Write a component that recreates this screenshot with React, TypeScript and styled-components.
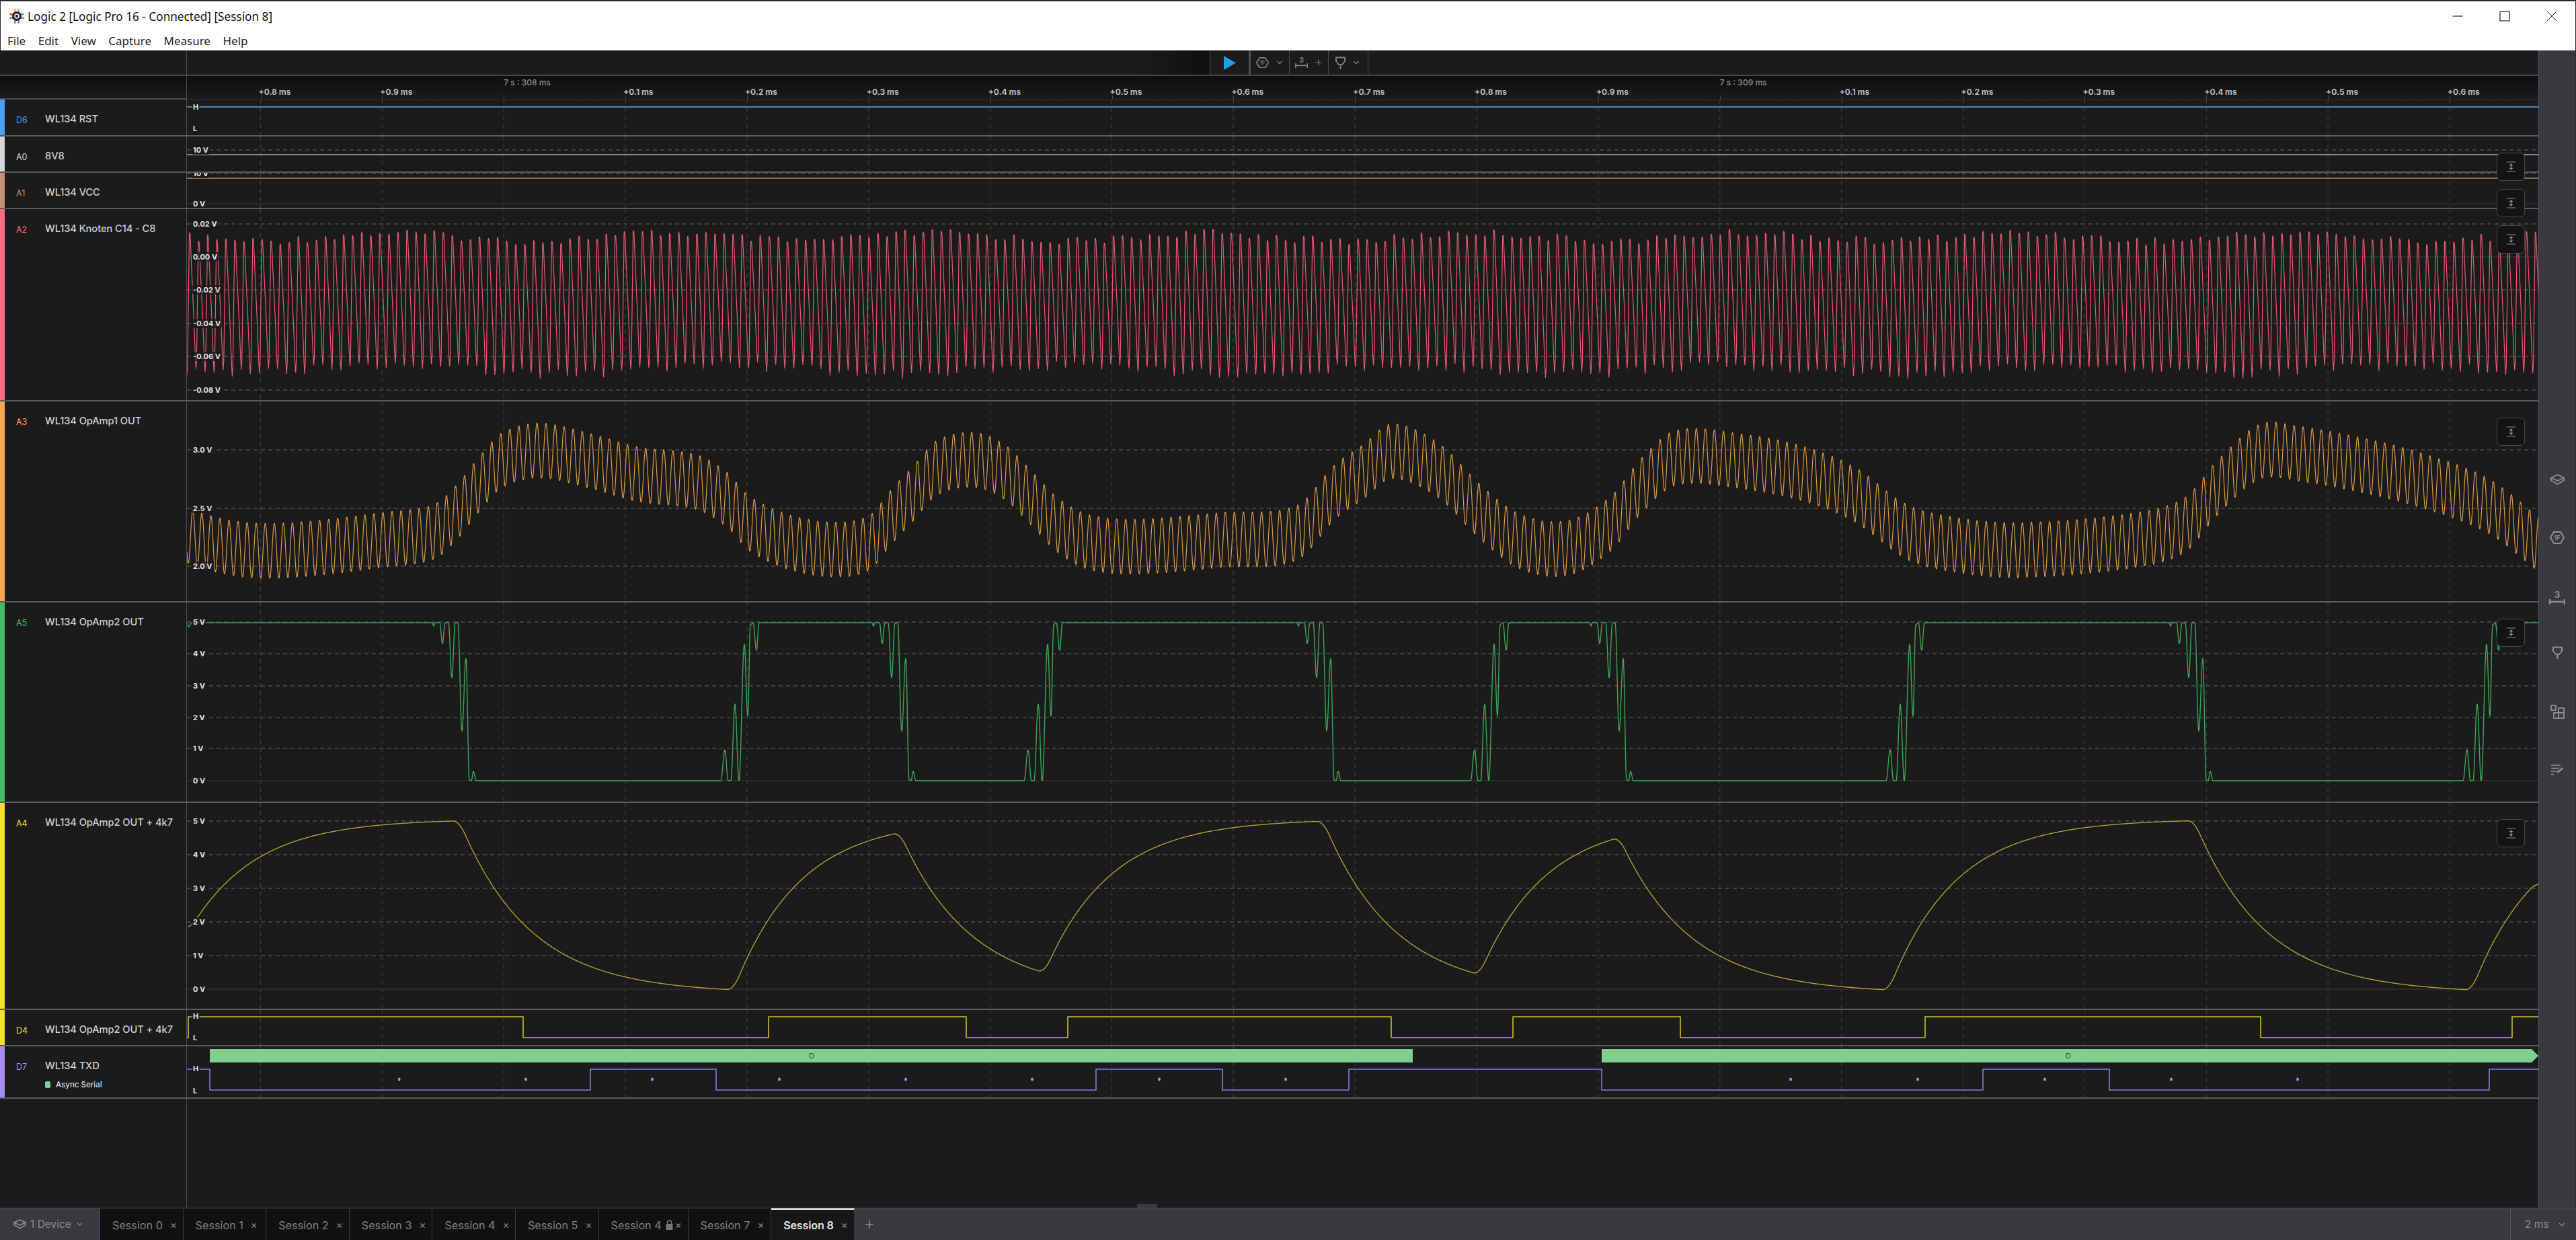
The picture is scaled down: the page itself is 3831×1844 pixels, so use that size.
import React from 'react';
import styled, { createGlobalStyle } from 'styled-components';
import { ChevronDown, Plus } from 'lucide-react';

const GlobalStyle = createGlobalStyle`
	html, body {
		margin: 0;
		padding: 0;
		overflow: hidden;
		background: #1b1b1c;
	}
	* {
		box-sizing: border-box;
	}
`;

const UI_FONT = `Inter, 'Liberation Sans', sans-serif`;
const GRID_X0 = 387.5;
const GRID_STEP = 180.86;
const PLOT_X0 = 278;
const PLOT_W = 3497;
const PERIOD = 13.47;

/* ---------- layout ---------- */

const Root = styled.div`
	width: 100vw;
	height: 100vh;
	display: flex;
	flex-direction: column;
	background: #1b1b1c;
	font-family: ${UI_FONT};
`;

const TitleBar = styled.div`
	height: 75px;
	flex: none;
	background: #fff;
	border-top: 2px solid #2a2a2a;
	border-left: 1px solid #2a2a2a;
	border-right: 1px solid #2a2a2a;
`;

const TitleRow = styled.div`
	height: 44px;
	display: flex;
	align-items: center;
	padding-left: 12px;
`;

const TitleText = styled.span`
	margin-left: 4px;
	font-family: 'Noto Sans', sans-serif;
	font-size: 17.2px;
	color: #111;
	white-space: nowrap;
`;

const WindowButtons = styled.div`
	margin-left: auto;
	display: flex;
	margin-right: 0;
`;

const WindowButton = styled.div`
	width: 70px;
	height: 44px;
	display: flex;
	align-items: center;
	justify-content: center;
`;

const MenuBar = styled.div`
	height: 29px;
	display: flex;
	align-items: center;
	padding-left: 10px;
	gap: 18.5px;
	font-family: 'Noto Sans', sans-serif;
	font-size: 17px;
	color: #222;
`;

const Main = styled.div`
	flex: 1;
	min-height: 0;
	display: flex;
`;

const Content = styled.div`
	flex: 1;
	min-width: 0;
	display: flex;
	flex-direction: column;
`;

const Toolbar = styled.div`
	height: 38px;
	flex: none;
	display: flex;
	border-bottom: 2px solid #46464a;
`;

const ToolbarCorner = styled.div`
	width: 278px;
	flex: none;
	border-right: 1.5px solid #4c4c50;
`;

const ToolbarFill = styled.div`
	width: 1521px;
	flex: none;
	background: linear-gradient(to right, #1b1b1c 93%, #0f0f0f 100%);
`;

const ToolCell = styled.div<{ $w: number; $thick?: boolean }>`
	width: ${(p) => p.$w}px;
	flex: none;
	display: flex;
	align-items: center;
	justify-content: center;
	gap: 9px;
	color: #7d7d7d;
	border-left: ${(p) => (p.$thick ? '3px solid #4c4c50' : '1px solid #4c4c50')};
`;

const ToolEnd = styled.div`
	flex: 1;
	border-left: 1px solid #4c4c50;
`;

const Ruler = styled.div`
	height: 35px;
	flex: none;
	display: flex;
`;

const RulerCorner = styled.div`
	width: 278px;
	flex: none;
	background: linear-gradient(#0e0e0e, #1a1a1b);
	border-right: 1.5px solid #4c4c50;
	border-bottom: 2px solid #4c4c50;
`;

const RulerTrack = styled.div`
	flex: 1;
	min-width: 0;
	display: flex;
	overflow: hidden;
	padding-left: ${GRID_X0 - PLOT_X0}px;
	background: linear-gradient(#0e0e0e, #1a1a1b);
	border-bottom: 1px solid #2f2f34;
`;

const Tick = styled.div`
	position: relative;
	width: ${GRID_STEP}px;
	flex: none;
	margin-right: 0;
	white-space: nowrap;

	&::after {
		content: '';
		position: absolute;
		left: 0;
		bottom: 0;
		height: 5px;
		border-left: 1.5px dashed #4a4a4e;
	}
`;

const TickText = styled.span<{ $major?: boolean }>`
	display: block;
	margin-left: ${(p) => (p.$major ? '0' : '-3px')};
	padding-top: ${(p) => (p.$major ? '3px' : '17px')};
	font-size: 12px;
	line-height: 14px;
	font-weight: ${(p) => (p.$major ? 500 : 700)};
	color: ${(p) => (p.$major ? '#8e8e8e' : '#b9b9b9')};
`;

const Rows = styled.div`
	flex: 1;
	min-height: 0;
	display: flex;
	flex-direction: column;
`;

const Row = styled.div<{ $h: number }>`
	height: ${(p) => p.$h}px;
	flex: none;
	display: flex;
	border-bottom: 2px solid #59595e;
`;

const LabelCell = styled.div<{ $color: string }>`
	width: 278px;
	flex: none;
	display: flex;
	flex-direction: column;
	padding-top: 19px;
	padding-left: 17px;
	background: #1b1b1c;
	border-left: 7px solid ${(p) => p.$color};
	border-right: 1.5px solid #4c4c50;
`;

const LabelLine = styled.div`
	display: flex;
	align-items: center;
	height: 20px;
`;

const Tag = styled.span<{ $color: string }>`
	width: 43px;
	flex: none;
	font-size: 12.5px;
	padding-top: 3px;
	color: ${(p) => p.$color};
`;

const Name = styled.span`
	font-size: 14.7px;
	font-weight: 500;
	letter-spacing: -0.1px;
	color: #cfcfcf;
	white-space: nowrap;
`;

const Analyzer = styled.div`
	display: flex;
	align-items: center;
	gap: 8px;
	margin-top: 11px;
	margin-left: 43px;
	font-size: 11.5px;
	font-weight: 500;
	color: #dcdcdc;
`;

const AnalyzerDot = styled.span`
	width: 8px;
	height: 10px;
	border-radius: 2px;
	background: #7fcf8f;
`;

const Plot = styled.div`
	position: relative;
	flex: 1;
	min-width: 0;
`;

const PlotClip = styled.div`
	position: relative;
	height: 100%;
	overflow: hidden;
`;

const AxisLabel = styled.span<{ $y: number }>`
	position: absolute;
	left: 7px;
	top: ${(p) => p.$y}px;
	transform: translateY(-50%);
	padding: 1px 2px;
	border-radius: 3px;
	background: rgba(27, 27, 28, 0.75);
	font-size: 11px;
	line-height: 12px;
	font-weight: 700;
	color: #e2e2e2;
	white-space: nowrap;
`;

const FitButton = styled.div`
	position: absolute;
	top: 24px;
	right: 20px;
	z-index: 5;
	width: 42px;
	height: 42px;
	display: flex;
	align-items: center;
	justify-content: center;
	border-radius: 7px;
	background: #141415;
	border: 1.5px solid #48484c;
	color: #8a8a8a;
`;

const EmptyRow = styled.div`
	position: relative;
	flex: 1;
	display: flex;
`;

const EmptyLabel = styled.div`
	width: 278px;
	flex: none;
	border-right: 1.5px solid #4c4c50;
`;

const DragHandle = styled.div`
	position: absolute;
	left: 1691px;
	bottom: 0;
	width: 30px;
	height: 6px;
	border-radius: 2px 2px 0 0;
	background: #3a393f;
`;

const Sidebar = styled.div`
	width: 56px;
	flex: none;
	padding-top: 594px;
	background: #3a393f;
	border-left: 1.5px solid #55555a;
	border-right: 1px solid #2a2a2a;
	color: #8f8f93;
`;

const SideItem = styled.div<{ $shift: number }>`
	height: 87px;
	display: flex;
	align-items: center;
	justify-content: center;
	padding-top: ${(p) => Math.max(p.$shift, 0) * 2}px;
	padding-bottom: ${(p) => Math.max(-p.$shift, 0) * 2}px;
`;

const TabBar = styled.div`
	height: 48px;
	flex: none;
	display: flex;
	background: #3a393f;
	border-top: 1.5px solid #4d4d52;
	color: #808080;
`;

const DeviceCell = styled.div`
	width: 149px;
	flex: none;
	display: flex;
	align-items: center;
	padding-left: 20px;
	gap: 6px;
	font-size: 15.5px;
	color: #8c8c8c;
	border-right: 1px solid #4d4d52;
`;

const Tab = styled.div<{ $active?: boolean; $locked?: boolean }>`
	width: ${(p) => (p.$locked ? 133 : 123.6)}px;
	height: 100%;
	display: flex;
	align-items: center;
	flex: none;
	padding-left: 18px;
	font-size: 16.2px;
	white-space: nowrap;
	font-weight: ${(p) => (p.$active ? 600 : 400)};
	letter-spacing: ${(p) => (p.$active ? '-0.2px' : '0')};
	color: ${(p) => (p.$active ? '#e4e4e4' : '#808080')};
	background: ${(p) => (p.$active ? '#171718' : '#111112')};
	border-right: 1px solid #3c3c40;
	border-top: ${(p) => (p.$active ? '2.5px solid #fff' : '2.5px solid transparent')};
`;

const TabClose = styled.span<{ $tight?: boolean }>`
	margin-left: ${(p) => (p.$tight ? 3 : 11)}px;
	font-size: 15px;
	font-weight: 400;
	color: #8a8a8a;
`;

const LockGlyph = styled.svg`
	margin-left: 6px;
`;

const AddTab = styled.div`
	width: 44px;
	display: flex;
	align-items: center;
	justify-content: center;
	color: #8c8c90;
`;

const ZoomCell = styled.div`
	margin-left: auto;
	width: 98px;
	flex: none;
	display: flex;
	align-items: center;
	padding-left: 21px;
	gap: 12px;
	font-size: 15.5px;
	color: #8c8c8c;
	border-left: 1px solid #55555a;
`;

/* ---------- wave forms ---------- */

type Key = [number, number];

const sample = (from: number, to: number, step: number, fn: (x: number) => number) => {
	const parts: string[] = [];
	for (let x = from; x <= to; x += step) {
		parts.push(`${parts.length ? 'L' : 'M'}${x.toFixed(1)} ${fn(x).toFixed(1)}`);
	}
	return parts.join('');
};

const findSegment = (keys: Key[], x: number) => {
	let i = 0;
	while (i < keys.length - 2 && keys[i + 1][0] < x) i++;
	return i;
};

const spline = (keys: Key[]) => (x: number) => {
	const i = findSegment(keys, x);
	const p0 = keys[Math.max(i - 1, 0)];
	const p1 = keys[i];
	const p2 = keys[i + 1];
	const p3 = keys[Math.min(i + 2, keys.length - 1)];
	const t = (x - p1[0]) / (p2[0] - p1[0]);
	const m1 = ((p2[1] - p0[1]) / (p2[0] - p0[0] || 1)) * (p2[0] - p1[0]);
	const m2 = ((p3[1] - p1[1]) / (p3[0] - p1[0] || 1)) * (p2[0] - p1[0]);
	const t2 = t * t;
	const t3 = t2 * t;
	return (2 * t3 - 3 * t2 + 1) * p1[1] + (t3 - 2 * t2 + t) * m1 + (-2 * t3 + 3 * t2) * p2[1] + (t3 - t2) * m2;
};

const eased = (keys: Key[]) => (x: number) => {
	const i = findSegment(keys, x);
	const a = keys[i];
	const b = keys[i + 1];
	const t = Math.min(Math.max((x - a[0]) / (b[0] - a[0]), 0), 1);
	return a[1] + (b[1] - a[1]) * (0.5 - 0.5 * Math.cos(Math.PI * t));
};

const logicPath = (startHigh: boolean, edges: number[], hi: number, lo: number) => {
	let high = startHigh;
	let d = `M${PLOT_X0} ${high ? hi : lo}`;
	edges.forEach((x) => {
		d += `H${x}`;
		high = !high;
		d += `V${high ? hi : lo}`;
	});
	return `${d}H${PLOT_X0 + PLOT_W}`;
};

const opamp1Center: Key[] = [
	[278, 796], [330, 812], [389, 819], [470, 815], [567, 803], [645, 791], [679, 762], [712, 721], [746, 685], [802, 670],
	[880, 686], [947, 705], [1036, 717], [1081, 743], [1114, 778], [1170, 805], [1237, 817], [1293, 807], [1326, 768],
	[1360, 732], [1393, 696], [1449, 684], [1494, 702], [1533, 740], [1572, 780], [1616, 805], [1683, 813], [1817, 803],
	[1929, 792], [1985, 732], [2027, 702], [2070, 671], [2140, 700], [2200, 760], [2260, 805], [2330, 815], [2394, 780],
	[2443, 720], [2492, 681], [2590, 686], [2687, 706], [2761, 737], [2834, 790], [2907, 810], [3005, 818], [3176, 803],
	[3250, 780], [3298, 725], [3360, 672], [3420, 675], [3518, 693], [3600, 714], [3700, 752], [3775, 809],
];

const opamp1Path = () => {
	const center = spline(opamp1Center);
	return sample(PLOT_X0, PLOT_X0 + PLOT_W, 0.6, (x) => center(x) + 41 * Math.cos((2 * Math.PI * (x - 280)) / PERIOD));
};

const knotenPath = () => {
	const parts: string[] = [];
	const n = Math.ceil(PLOT_W / PERIOD) + 1;
	for (let i = -1; i < n; i++) {
		const x0 = 282 + i * PERIOD;
		const noise = Math.sin(i * 12.9898) * 43758.5453;
		const rnd = noise - Math.floor(noise);
		const noise2 = Math.sin(i * 78.233) * 24634.6345;
		const rnd2 = noise2 - Math.floor(noise2);
		const top = 352 + 6 * Math.sin(i * 0.21) + (rnd - 0.5) * 12;
		const bottom = 550 + 6 * Math.sin(i * 0.17 + 1) + (rnd2 - 0.5) * 14;
		const h = bottom - top;
		const pts: Key[] = [
			[x0 - 0.5, top + 2],
			[x0, top],
			[x0 + 0.8, top + 3],
			[x0 + 3, top + h * 0.27],
			[x0 + 6, top + h * 0.6],
			[x0 + 8.6, top + h * 0.93],
			[x0 + 9.5, bottom],
			[x0 + 10.4, top + h * 0.93],
			[x0 + 12.7, top + h * 0.12],
		];
		pts.forEach(([x, y]) => {
			if (x >= PLOT_X0 - 2 && x <= PLOT_X0 + PLOT_W + 2) parts.push(`${parts.length ? 'L' : 'M'}${x.toFixed(1)} ${y.toFixed(1)}`);
		});
	}
	return parts.join('');
};

const HI5 = 926;
const LO5 = 1161;

const fallGroup = (x: number): Key[] => [
	[x - 55, HI5], [x - 53, 931], [x - 51, HI5], [x - 44, HI5], [x - 40, 957], [x - 36, HI5], [x - 31, HI5], [x - 26, 1008],
	[x - 21, HI5], [x - 17, HI5], [x - 11, 1087], [x - 5, 979], [x, LO5 - 1], [x + 3, LO5], [x + 6, 1147], [x + 10, LO5],
];

const riseGroup = (x: number): Key[] => [
	[x - 44, LO5], [x - 38, 1115], [x - 33, LO5], [x - 29, LO5], [x - 23, 1047], [x - 17, LO5], [x - 9, 958], [x - 4, 1065],
	[x, 929], [x + 4, HI5], [x + 9, 967], [x + 13, HI5],
];

const FALLS = [698, 1352, 1984, 2419, 3281];
const RISES = [1116, 1567, 2231, 2849, 3707];

const opamp2Path = () => {
	const keys: Key[] = [[278, HI5 + 1], [281, 932], [285, HI5]];
	FALLS.forEach((fall, i) => {
		keys.push(...fallGroup(fall), ...riseGroup(RISES[i]));
	});
	keys.push([3780, HI5]);
	return sample(PLOT_X0, PLOT_X0 + PLOT_W, 0.5, eased(keys));
};

// rc filter of the op amp output, with the corners rounded off
const FILTER_DOWN = [684, 1339, 1969, 2409, 3264];
const FILTER_UP = [1092, 1554, 2201, 2810, 3677];

const filteredPath = () => {
	const ys: number[] = [];
	let y = 1388;
	let high = true;
	for (let x = 280; x <= PLOT_X0 + PLOT_W; x += 1) {
		if (FILTER_DOWN.includes(x)) high = false;
		if (FILTER_UP.includes(x)) high = true;
		y += high ? (1218 - y) / 98 : (1477 - y) / 105;
		ys.push(y);
	}
	const R = 9;
	const parts: string[] = [];
	ys.forEach((_, i) => {
		const from = Math.max(i - R, 0);
		const to = Math.min(i + R, ys.length - 1);
		let sum = 0;
		for (let j = from; j <= to; j++) sum += ys[j];
		parts.push(`${parts.length ? 'L' : 'M'}${280 + i} ${(sum / (to - from + 1)).toFixed(1)}`);
	});
	return parts.join('');
};

/* ---------- channel data ---------- */

type Axis = { y: number; label: string; line?: 'dash' | 'solid' };
type Trace = { d: string; color: string; width: number };

type Channel = {
	tag: string;
	name: string;
	color: string;
	top: number;
	h: number;
	axes: Axis[];
	traces: Trace[];
	fit?: boolean;
	analyzer?: string;
	extra?: React.ReactNode;
};

const TX_DOTS = [593.6, 782, 970, 1159, 1347, 1535, 1724, 1912, 2663, 2852, 3041, 3229, 3417];

const channels: Channel[] = [
	{
		tag: 'D6',
		name: 'WL134 RST',
		color: '#4b9eff',
		top: 148,
		h: 55,
		axes: [
			{ y: 159, label: 'H' },
			{ y: 191, label: 'L' },
		],
		traces: [{ d: `M${PLOT_X0} 159H3775`, color: '#4a86c5', width: 2 }],
	},
	{
		tag: 'A0',
		name: '8V8',
		color: '#d6d6d6',
		top: 203,
		h: 54,
		fit: true,
		axes: [{ y: 223, label: '10 V', line: 'dash' }],
		traces: [{ d: `M${PLOT_X0} 230H3775`, color: '#a8a8a8', width: 1.6 }],
	},
	{
		tag: 'A1',
		name: 'WL134 VCC',
		color: '#c49277',
		top: 257,
		h: 54,
		fit: true,
		axes: [
			{ y: 258, label: '10 V', line: 'dash' },
			{ y: 303, label: '0 V', line: 'solid' },
		],
		traces: [{ d: `M${PLOT_X0} 265H3775`, color: '#8a6a58', width: 1.8 }],
	},
	{
		tag: 'A2',
		name: 'WL134 Knoten C14 - C8',
		color: '#ff6b81',
		top: 311,
		h: 286,
		fit: true,
		axes: [
			{ y: 333, label: '0.02 V', line: 'dash' },
			{ y: 382, label: '0.00 V', line: 'solid' },
			{ y: 431, label: '-0.02 V', line: 'dash' },
			{ y: 481, label: '-0.04 V', line: 'dash' },
			{ y: 530, label: '-0.06 V', line: 'dash' },
			{ y: 580, label: '-0.08 V', line: 'dash' },
		],
		traces: [{ d: knotenPath(), color: '#e65c73', width: 1.2 }],
	},
	{
		tag: 'A3',
		name: 'WL134 OpAmp1 OUT',
		color: '#ffa64d',
		top: 597,
		h: 299,
		fit: true,
		axes: [
			{ y: 669, label: '3.0 V', line: 'dash' },
			{ y: 756, label: '2.5 V', line: 'dash' },
			{ y: 842, label: '2.0 V', line: 'dash' },
		],
		traces: [{ d: opamp1Path(), color: '#dd9a45', width: 1.2 }],
	},
	{
		tag: 'A5',
		name: 'WL134 OpAmp2 OUT',
		color: '#3fbf62',
		top: 896,
		h: 298,
		fit: true,
		axes: [
			{ y: 925, label: '5 V', line: 'dash' },
			{ y: 972, label: '4 V', line: 'dash' },
			{ y: 1020, label: '3 V', line: 'dash' },
			{ y: 1067, label: '2 V', line: 'dash' },
			{ y: 1113, label: '1 V', line: 'dash' },
			{ y: 1161, label: '0 V', line: 'solid' },
		],
		traces: [{ d: opamp2Path(), color: '#3fa457', width: 1.4 }],
	},
	{
		tag: 'A4',
		name: 'WL134 OpAmp2 OUT + 4k7',
		color: '#f2e02e',
		top: 1194,
		h: 308,
		fit: true,
		axes: [
			{ y: 1221, label: '5 V', line: 'dash' },
			{ y: 1271, label: '4 V', line: 'dash' },
			{ y: 1321, label: '3 V', line: 'dash' },
			{ y: 1371, label: '2 V', line: 'dash' },
			{ y: 1421, label: '1 V', line: 'dash' },
			{ y: 1471, label: '0 V', line: 'solid' },
		],
		traces: [{ d: filteredPath(), color: '#aaa02c', width: 1.4 }],
	},
	{
		tag: 'D4',
		name: 'WL134 OpAmp2 OUT + 4k7',
		color: '#f2e02e',
		top: 1502,
		h: 54,
		axes: [
			{ y: 1511, label: 'H' },
			{ y: 1543, label: 'L' },
		],
		traces: [
			{
				d: logicPath(false, [280, 778, 1143, 1437, 1588, 2069, 2250, 2499, 2863, 3362, 3736], 1512, 1543),
				color: '#cdbf2b',
				width: 1.6,
			},
		],
	},
	{
		tag: 'D7',
		name: 'WL134 TXD',
		color: '#a58cf2',
		top: 1556,
		h: 78,
		analyzer: 'Async Serial',
		axes: [
			{ y: 1589, label: 'H' },
			{ y: 1622, label: 'L' },
		],
		traces: [
			{
				d: logicPath(true, [312, 878, 1065, 1630, 1818, 2006, 2382, 2949, 3137, 3702], 1590, 1621),
				color: '#8f78d8',
				width: 1.6,
			},
		],
		extra: (
			<>
				<rect x={312} y={1560} width={1789} height={20} fill="#7fcf8f" />
				<polygon points="2382,1560 3765,1560 3775,1570 3765,1580 2382,1580" fill="#7fcf8f" />
				<text x={1207} y={1574} fontSize={11} fontFamily={UI_FONT} fill="#24603a" textAnchor="middle">
					D
				</text>
				<text x={3076} y={1574} fontSize={11} fontFamily={UI_FONT} fill="#24603a" textAnchor="middle">
					D
				</text>
				{TX_DOTS.map((x) => (
					<ellipse key={x} cx={x} cy={1605} rx={2} ry={2.4} fill="#a58cf2" />
				))}
			</>
		),
	},
];

const gridXs = Array.from({ length: 19 }, (_, k) => GRID_X0 + k * GRID_STEP);

const ticks = ['+0.8', '+0.9', '', '+0.1', '+0.2', '+0.3', '+0.4', '+0.5', '+0.6', '+0.7', '+0.8', '+0.9', '', '+0.1', '+0.2', '+0.3', '+0.4', '+0.5', '+0.6'];
const sessions = ['Session 0', 'Session 1', 'Session 2', 'Session 3', 'Session 4', 'Session 5', 'Session 4', 'Session 7', 'Session 8'];

/* ---------- icons ---------- */

const Logo = () => (
	<svg width="24" height="24" viewBox="0 0 24 24">
		<rect x="0.5" y="0.5" width="23" height="23" rx="5" fill="#f4f4f6" />
		<rect x="8" y="1" width="2.4" height="5" fill="#f0b323" />
		<rect x="13.5" y="1" width="2.4" height="5" fill="#f0b323" />
		<rect x="1.5" y="8" width="5" height="2.4" fill="#ee4b3c" />
		<rect x="1.5" y="13.5" width="5" height="2.4" fill="#ee4b3c" />
		<rect x="17.5" y="8" width="5" height="2.4" fill="#2aa5e6" />
		<rect x="17.5" y="13.5" width="5" height="2.4" fill="#2aa5e6" />
		<rect x="8" y="18" width="2.4" height="5" fill="#a45de0" />
		<rect x="13.5" y="18" width="2.4" height="5" fill="#a45de0" />
		<circle cx="12" cy="12" r="7" fill="#26262a" />
		<circle cx="12" cy="12" r="3" fill="none" stroke="#f4f4f6" strokeWidth="1.6" />
	</svg>
);

const MinimizeIcon = () => (
	<svg width="16" height="16" viewBox="0 0 16 16">
		<path d="M0.5 8H15.5" stroke="#111" strokeWidth="1.1" />
	</svg>
);

const MaximizeIcon = () => (
	<svg width="16" height="16" viewBox="0 0 16 16">
		<rect x="1" y="1" width="14" height="14" fill="none" stroke="#111" strokeWidth="1.1" />
	</svg>
);

const CloseIcon = () => (
	<svg width="16" height="16" viewBox="0 0 16 16">
		<path d="M1 1L15 15M15 1L1 15" stroke="#111" strokeWidth="1" />
	</svg>
);

const PlayIcon = () => (
	<svg width="18" height="21" viewBox="0 0 18 21">
		<polygon points="0,0 18,10.5 0,21" fill="#21a0dd" />
	</svg>
);

const LayersIcon = ({ size = 21 }: { size?: number }) => (
	<svg width={size} height={(size * 16) / 21} viewBox="0 0 21 16" fill="none" stroke="currentColor" strokeWidth="1.8" strokeLinejoin="round">
		<path d="M10.5 1L20 5.5L10.5 10L1 5.5Z" />
		<path d="M1 5.5V9.5L10.5 15L20 9.5V5.5" />
	</svg>
);

const HexIcon = ({ width = 19 }: { width?: number }) => (
	<svg width={width} height={(width * 19) / 22} viewBox="0 0 22 19" fill="none">
		<path d="M6 1H16L21 9.5L16 18H6L1 9.5Z" stroke="currentColor" strokeWidth="2" strokeLinejoin="round" />
		<text x="11" y="13" fontSize="9.5" fontWeight="600" fontFamily={UI_FONT} fill="currentColor" stroke="none" textAnchor="middle">
			1F
		</text>
	</svg>
);

const MeasureIcon = ({ width = 19 }: { width?: number }) => (
	<svg width={width} height={(width * 20) / 22} viewBox="0 0 22 20" fill="none">
		<text x="11" y="10" fontSize="12" fontWeight="700" fontFamily={UI_FONT} fill="currentColor" textAnchor="middle">
			3
		</text>
		<path d="M1 12V20M21 12V20M1 15.5H21" stroke="currentColor" strokeWidth="2" />
	</svg>
);

const FunnelIcon = ({ width = 15 }: { width?: number }) => (
	<svg width={width} height={(width * 19) / 15} viewBox="0 0 15 19" fill="none" stroke="currentColor" strokeWidth="2" strokeLinejoin="round">
		<path d="M1 1.5H14V7L10 12H5L1 7Z" />
		<path d="M7.5 12V19" />
	</svg>
);

const GridIcon = () => (
	<svg width="21" height="21" viewBox="0 0 21 21" fill="none" stroke="currentColor" strokeWidth="1.8">
		<rect x="1" y="1" width="7" height="7" />
		<rect x="12" y="5" width="8" height="7" />
		<rect x="5" y="12" width="7" height="8" />
		<rect x="12" y="12" width="8" height="8" />
	</svg>
);

const NotesIcon = () => (
	<svg width="20" height="17" viewBox="0 0 20 17" fill="none" stroke="currentColor" strokeWidth="1.7">
		<path d="M1 2H15M1 6.5H13M1 11H9M1 15.5H5" />
		<path d="M10 13L18.5 6" strokeWidth="2.6" />
	</svg>
);

const FitIcon = () => (
	<svg width="13" height="16" viewBox="0 0 13 16" fill="none" stroke="currentColor">
		<path d="M0 1H13M0 15H13" strokeWidth="1.2" />
		<path d="M6.5 4V12" strokeWidth="1.4" />
		<path d="M4 6L6.5 3.5L9 6ZM4 10L6.5 12.5L9 10Z" fill="currentColor" strokeWidth="0.6" />
	</svg>
);

const LockIcon = () => (
	<LockGlyph width="11" height="15" viewBox="0 0 11 15">
		<path d="M2.5 6V4a3 3 0 0 1 6 0v2" fill="none" stroke="#77777b" strokeWidth="1.5" />
		<rect x="0.5" y="6" width="10" height="9" rx="1.2" fill="#77777b" />
	</LockGlyph>
);

/* ---------- channel row ---------- */

const ChannelPlot = ({ channel }: { channel: Channel }) => {
	const height = channel.h - 2;
	const toY = (y: number) => y - channel.top;

	return (
		<Plot>
			<PlotClip>
				<svg width={PLOT_W} height={height} viewBox={`${PLOT_X0} ${channel.top} ${PLOT_W} ${height}`} style={{ display: 'block' }} fill="none">
					{gridXs.map((x) => (
						<path key={x} d={`M${x} ${channel.top}V${channel.top + height}`} stroke="#3d3d42" strokeWidth="1.2" strokeDasharray="6 6" />
					))}
					{channel.axes
						.filter((a) => a.line)
						.map((a) => (
							<path
								key={a.label}
								d={`M${PLOT_X0} ${a.y}H${PLOT_X0 + PLOT_W}`}
								stroke={a.line === 'solid' ? '#303033' : '#4c4c50'}
								strokeWidth="1.3"
								strokeDasharray={a.line === 'solid' ? undefined : '6 5'}
							/>
						))}
					{channel.extra}
					{channel.traces.map((t) => (
						<path key={t.color} d={t.d} stroke={t.color} strokeWidth={t.width} strokeLinejoin="round" />
					))}
				</svg>
				{channel.axes.map((a) => (
					<AxisLabel key={a.label} $y={toY(a.y)}>
						{a.label}
					</AxisLabel>
				))}
			</PlotClip>
			{channel.fit && (
				<FitButton>
					<FitIcon />
				</FitButton>
			)}
		</Plot>
	);
};

const ChannelRow = ({ channel }: { channel: Channel }) => (
	<Row $h={channel.h}>
		<LabelCell $color={channel.color}>
			<LabelLine>
				<Tag $color={channel.color}>{channel.tag}</Tag>
				<Name>{channel.name}</Name>
			</LabelLine>
			{channel.analyzer && (
				<Analyzer>
					<AnalyzerDot />
					{channel.analyzer}
				</Analyzer>
			)}
		</LabelCell>
		<ChannelPlot channel={channel} />
	</Row>
);

const App = () => (
	<Root>
		<GlobalStyle />
		<TitleBar>
			<TitleRow>
				<Logo />
				<TitleText>Logic 2 [Logic Pro 16 - Connected] [Session 8]</TitleText>
				<WindowButtons>
					<WindowButton>
						<MinimizeIcon />
					</WindowButton>
					<WindowButton>
						<MaximizeIcon />
					</WindowButton>
					<WindowButton>
						<CloseIcon />
					</WindowButton>
				</WindowButtons>
			</TitleRow>
			<MenuBar>
				<span>File</span>
				<span>Edit</span>
				<span>View</span>
				<span>Capture</span>
				<span>Measure</span>
				<span>Help</span>
			</MenuBar>
		</TitleBar>
		<Main>
			<Content>
				<Toolbar>
					<ToolbarCorner />
					<ToolbarFill />
					<ToolCell $w={58}>
						<PlayIcon />
					</ToolCell>
					<ToolCell $w={60} $thick>
						<HexIcon />
						<ChevronDown size={14} />
					</ToolCell>
					<ToolCell $w={58}>
						<MeasureIcon />
						<Plus size={14} />
					</ToolCell>
					<ToolCell $w={59}>
						<FunnelIcon />
						<ChevronDown size={14} />
					</ToolCell>
					<ToolEnd />
				</Toolbar>
				<Ruler>
					<RulerCorner />
					<RulerTrack>
						{ticks.map((t, i) => (
							<Tick key={i}>
								{t ? <TickText>{t} ms</TickText> : <TickText $major>{i < 5 ? '7 s : 308 ms' : '7 s : 309 ms'}</TickText>}
							</Tick>
						))}
					</RulerTrack>
				</Ruler>
				<Rows>
					{channels.map((c) => (
						<ChannelRow key={c.tag} channel={c} />
					))}
					<EmptyRow>
						<EmptyLabel />
						<DragHandle />
					</EmptyRow>
				</Rows>
			</Content>
			<Sidebar>
				<SideItem $shift={0}>
					<LayersIcon />
				</SideItem>
				<SideItem $shift={0}>
					<HexIcon width={22} />
				</SideItem>
				<SideItem $shift={2}>
					<MeasureIcon width={24} />
				</SideItem>
				<SideItem $shift={-3}>
					<FunnelIcon />
				</SideItem>
				<SideItem $shift={-2}>
					<GridIcon />
				</SideItem>
				<SideItem $shift={-3}>
					<NotesIcon />
				</SideItem>
			</Sidebar>
		</Main>
		<TabBar>
			<DeviceCell>
				<LayersIcon size={19} />
				1 Device
				<ChevronDown size={13} />
			</DeviceCell>
			{sessions.map((s, i) => (
				<Tab key={i} $active={i === 8} $locked={i === 6}>
					{s}
					{i === 6 && <LockIcon />}
					<TabClose $tight={i === 6}>×</TabClose>
				</Tab>
			))}
			<AddTab>
				<Plus size={18} />
			</AddTab>
			<ZoomCell>
				2 ms
				<ChevronDown size={14} />
			</ZoomCell>
		</TabBar>
	</Root>
);

export default App;
